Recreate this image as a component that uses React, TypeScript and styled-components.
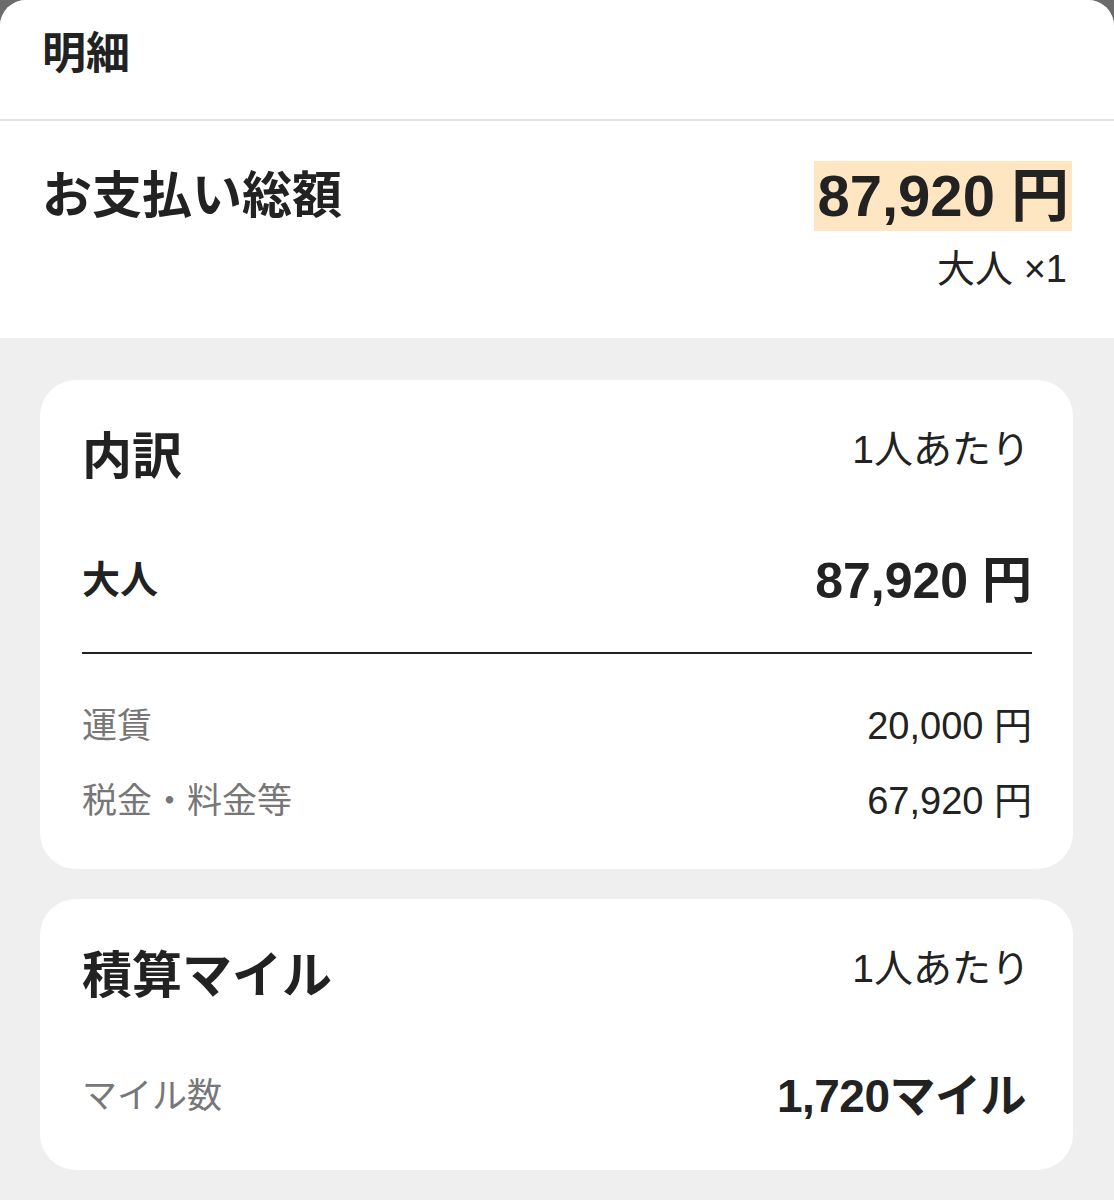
import React from 'react'
import styled, {createGlobalStyle} from 'styled-components'

const GlobalStyle = createGlobalStyle`
  html, body {
    margin: 0;
    padding: 0;
    background: #6b6b6b;
  }
  body {
    font-family: "Liberation Sans", "Noto Sans CJK JP", sans-serif;
    color: #222;
    -webkit-font-smoothing: antialiased;
  }
`

const Sheet = styled.div`
  min-height: 1200px;
  background: #efefef;
  border-radius: 26px 26px 0 0;
  overflow: hidden;
`

const Header = styled.header`
  height: 121px;
  box-sizing: border-box;
  padding: 31px 42px 0;
  background: #fff;
  border-bottom: 2px solid #e2e2e2;
  font-size: 44px;
  line-height: 46px;
  font-weight: 700;
`

const TotalSection = styled.section`
  height: 217px;
  box-sizing: border-box;
  padding: 40px 42px 0;
  background: #fff;
  display: flex;
  justify-content: space-between;
  align-items: flex-start;
`

const TotalTitle = styled.h1`
  margin: 0;
  font-size: 50px;
  line-height: 70px;
  font-weight: 700;
`

const TotalSide = styled.div`
  display: flex;
  flex-direction: column;
  align-items: flex-end;
`

const TotalPrice = styled.div`
  background: #fde6c1;
  padding: 0 3px;
  font-size: 58px;
  line-height: 70px;
  font-weight: 700;
  white-space: nowrap;
`

const Passengers = styled.div`
  margin-top: 16px;
  margin-right: 5px;
  font-size: 38px;
  line-height: 44px;
`

const Cards = styled.div`
  padding: 42px 41px 30px 40px;
  display: flex;
  flex-direction: column;
  gap: 30px;
`

const Card = styled.section`
  background: #fff;
  border-radius: 36px;
  padding: 42px 43px 48px 42px;
`

const Row = styled.div<{$gap?: number; $height?: number}>`
  display: flex;
  justify-content: space-between;
  align-items: center;
  margin-top: ${p => p.$gap ?? 0}px;
  height: ${p => p.$height ?? 60}px;
  white-space: nowrap;
`

const CardTitle = styled.h2`
  margin: 0;
  font-size: 50px;
  font-weight: 700;
`

const PerPerson = styled.span`
  font-size: 39px;
  margin-top: -12px;
`

const ItemLabel = styled.span<{$muted?: boolean}>`
  font-size: ${p => (p.$muted ? 35 : 38)}px;
  font-weight: ${p => (p.$muted ? 400 : 700)};
  color: ${p => (p.$muted ? '#777' : '#222')};
`

const Amount = styled.span<{$bold?: boolean}>`
  font-size: ${p => (p.$bold ? 50 : 38)}px;
  font-weight: ${p => (p.$bold ? 700 : 400)};
  color: #222;
  margin-right: -2px;
`

const Miles = styled.span`
  font-size: 46px;
  font-weight: 700;
  color: #222;
  margin-right: 4px;
  letter-spacing: -0.5px;
`

const Rule = styled.hr`
  margin: 46px -2px 0 0;
  border: none;
  height: 2px;
  background: #222;
`

const charges = [
  {label: '運賃', amount: '20,000 円'},
  {label: '税金・料金等', amount: '67,920 円'},
]

const App: React.FC = () => {
  return (
    <>
      <GlobalStyle />
      <Sheet>
        <Header>明細</Header>
        <TotalSection>
          <TotalTitle>お支払い総額</TotalTitle>
          <TotalSide>
            <TotalPrice>87,920 円</TotalPrice>
            <Passengers>大人 ×1</Passengers>
          </TotalSide>
        </TotalSection>

        <Cards>
          <Card>
            <Row>
              <CardTitle>内訳</CardTitle>
              <PerPerson>1人あたり</PerPerson>
            </Row>
            <Row $gap={64}>
              <ItemLabel>大人</ItemLabel>
              <Amount $bold>87,920 円</Amount>
            </Row>
            <Rule />
            {charges.map((c, i) => (
              <Row key={c.label} $gap={i === 0 ? 44 : 27} $height={48}>
                <ItemLabel $muted>{c.label}</ItemLabel>
                <Amount>{c.amount}</Amount>
              </Row>
            ))}
          </Card>

          <Card>
            <Row>
              <CardTitle>積算マイル</CardTitle>
              <PerPerson>1人あたり</PerPerson>
            </Row>
            <Row $gap={61}>
              <ItemLabel $muted>マイル数</ItemLabel>
              <Miles>1,720マイル</Miles>
            </Row>
          </Card>
        </Cards>
      </Sheet>
    </>
  )
}

export default App
